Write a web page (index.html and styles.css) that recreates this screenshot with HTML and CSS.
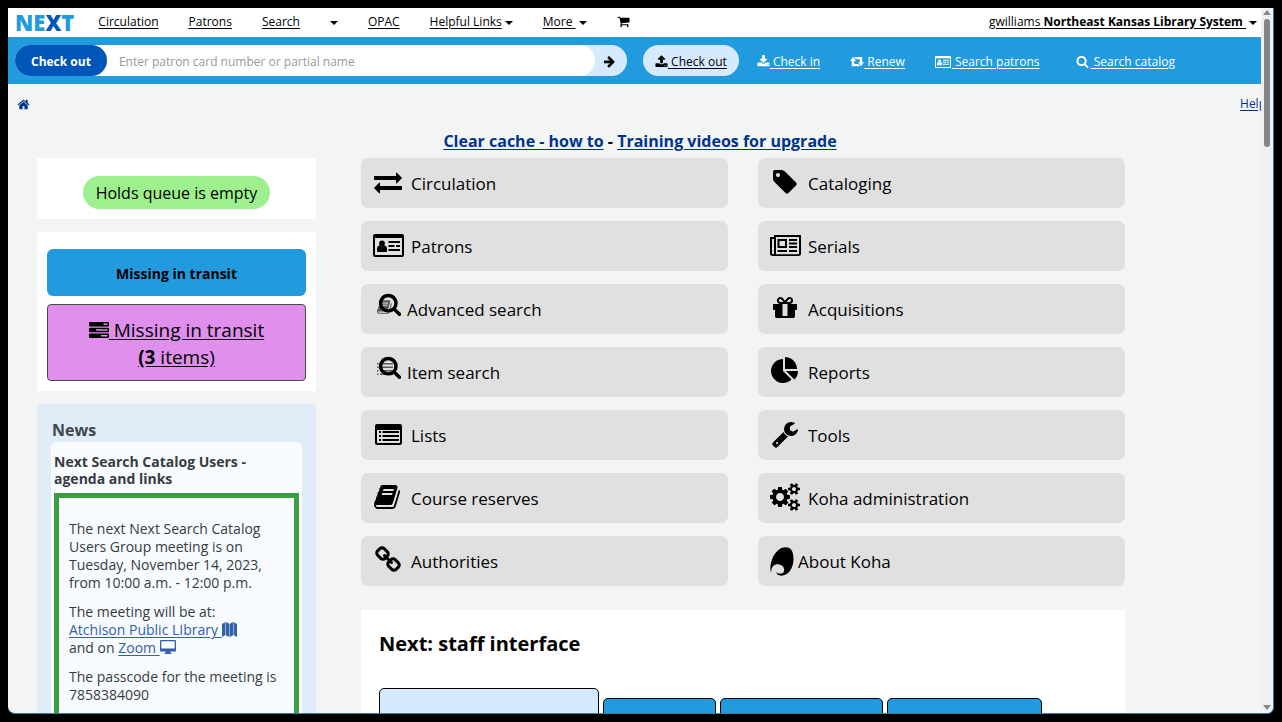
FILE: index.html
```html
<!DOCTYPE html>
<html lang="en">
<head>
<meta charset="utf-8">
<title>Koha staff interface</title>
<link rel="stylesheet" href="styles.css">
</head>
<body>
<svg class="sprite" aria-hidden="true">
  <symbol id="home" viewBox="0 0 1792 1792"><path d="M1472 992v480q0 26-19 45t-45 19h-384v-384h-256v384h-384q-26 0-45-19t-19-45v-480q0-1 .5-3t.5-3l575-474 575 474q1 2 1 6zm223-69l-62 74q-8 9-21 11h-3q-13 0-21-7l-692-577-692 577q-12 8-24 7-13-2-21-11l-62-74q-8-10-7-23.5t11-21.5l719-599q32-26 76-26t76 26l244 204v-195q0-14 9-23t23-9h192q14 0 23 9t9 23v408l219 182q10 8 11 21.5t-7 23.5z"/></symbol>
  <symbol id="search" viewBox="0 0 1792 1792"><path d="M1216 832q0-185-131.5-316.5t-316.5-131.5-316.5 131.5-131.5 316.5 131.5 316.5 316.5 131.5 316.5-131.5 131.5-316.5zm512 832q0 52-38 90t-90 38q-54 0-90-38l-343-342q-179 124-399 124-143 0-273.5-55.5t-225-150-150-225-55.5-273.5 55.5-273.5 150-225 225-150 273.5-55.5 273.5 55.5 225 150 150 225 55.5 273.5q0 220-124 399l343 343q37 37 37 90z"/></symbol>
  <symbol id="tag" viewBox="0 0 1792 1792"><path d="M576 448q0-53-37.5-90.5t-90.5-37.5-90.5 37.5-37.5 90.5 37.5 90.5 90.5 37.5 90.5-37.5 37.5-90.5zm1067 576q0 53-37 90l-491 492q-39 37-91 37-53 0-90-37l-715-716q-38-37-64.5-101t-26.5-117v-416q0-52 38-90t90-38h416q53 0 117 26.5t102 64.5l715 714q37 39 37 91z"/></symbol>
  <symbol id="arrow" viewBox="0 0 1792 1792"><path d="M1600 960q0 54-37 91l-651 651q-39 37-91 37-51 0-90-37l-75-75q-38-38-38-91t38-91l293-293h-704q-52 0-84.5-37.5t-32.5-90.5v-128q0-53 32.5-90.5t84.5-37.5h704l-293-294q-38-36-38-90t38-90l75-75q38-38 90-38 53 0 91 38l651 651q37 35 37 90z"/></symbol>
  <symbol id="cart" viewBox="0 0 1792 1792"><path d="M704 1536q0 52-38 90t-90 38-90-38-38-90 38-90 90-38 90 38 38 90zm896 0q0 52-38 90t-90 38-90-38-38-90 38-90 90-38 90 38 38 90zm128-1088v512q0 24-16.500 42.500t-40.500 21.500l-1044 122q13 60 13 70 0 16-24 64h920q26 0 45 19t19 45-19 45-45 19h-1024q-26 0-45-19t-19-45q0-11 8-31.500t16-36 21.500-40 15.500-29.500l-177-823h-204q-26 0-45-19t-19-45 19-45 45-19h256q16 0 28.500 6.500t19.500 15.500 13 24.500 8 26 5.500 29.500 4.500 26h1201q26 0 45 19t19 45z"/></symbol>
  <symbol id="gift" viewBox="0 0 1792 1792"><path d="M1056 1356v-716h-320v716q0 25 18 38.500t46 13.500h192q28 0 46-13.500t18-38.500zm-456-844h195l-126-161q-26-31-69-31-40 0-68 28t-28 68 28 68 68 28zm688-96q0-40-28-68t-68-28q-43 0-69 31l-125 161h194q40 0 68-28t28-68zm376 256v320q0 14-9 23t-23 9h-96v416q0 40-28 68t-68 28h-1088q-40 0-68-28t-28-68v-416h-96q-14 0-23-9t-9-23v-320q0-14 9-23t23-9h440q-93 0-158.500-65.500t-65.500-158.500 65.500-158.500 158.500-65.500q107 0 168 77l128 165 128-165q61-77 168-77 93 0 158.500 65.500t65.500 158.500-65.500 158.500-158.500 65.500h440q14 0 23 9t9 23z"/></symbol>
  <symbol id="pie" viewBox="0 0 1792 1792"><path d="M768 890l546 546q-106 108-247.500 168t-298.500 60q-209 0-385.500-103t-279.500-279.500-103-385.500 103-385.500 279.500-279.500 385.500-103v762zm187 6h773q0 157-60 298.500t-168 247.500zm709-128h-768v-768q209 0 385.500 103t279.500 279.500 103 385.500z"/></symbol>
  <symbol id="wrench" viewBox="0 0 1792 1792"><path d="M448 1472q0-26-19-45t-45-19-45 19-19 45 19 45 45 19 45-19 19-45zm644-420l-682 682q-37 37-90 37-52 0-91-37l-106-108q-38-36-38-90 0-53 38-91l681-681q39 98 114.500 173.500t173.500 114.500zm634-435q0 39-23 106-47 134-164.500 217.500t-258.500 83.500q-185 0-316.500-131.500t-131.500-316.500 131.500-316.500 316.500-131.500q58 0 121.500 16.500t107.500 46.500q16 11 16 28t-16 28l-293 169v224l193 107q5-3 79-48.500t135.500-81 70.500-35.500q15 0 23.500 10t8.500 25z"/></symbol>
  <symbol id="exchange" viewBox="0 0 1792 1792"><path d="M1792 1184v192q0 13-9.500 22.500t-22.500 9.500h-1376v192q0 13-9.500 22.500t-22.500 9.500q-12 0-24-10l-319-320q-9-9-9-22 0-14 9-23l320-320q9-9 23-9 13 0 22.500 9.500t9.500 22.500v192h1376q13 0 22.500 9.500t9.500 22.500zm0-544q0 14-9 23l-320 320q-9 9-23 9-13 0-22.500-9.500t-9.500-22.500v-192h-1376q-13 0-22.500-9.500t-9.500-22.500v-192q0-13 9.500-22.500t22.500-9.500h1376v-192q0-14 9-23t23-9q12 0 24 10l319 319q9 9 9 23z"/></symbol>
  <symbol id="upload" viewBox="0 0 1792 1792"><path d="M1344 1472q0-26-19-45t-45-19-45 19-19 45 19 45 45 19 45-19 19-45zm256 0q0-26-19-45t-45-19-45 19-19 45 19 45 45 19 45-19 19-45zm128-224v320q0 40-28 68t-68 28h-1472q-40 0-68-28t-28-68v-320q0-40 28-68t68-28h427q21 56 70.500 92t110.500 36h256q61 0 110.500-36t70.500-92h427q40 0 68 28t28 68zm-325-648q-17 40-59 40h-256v448q0 26-19 45t-45 19h-256q-26 0-45-19t-19-45v-448h-256q-42 0-59-40-17-39 14-69l448-448q18-19 45-19t45 19l448 448q31 30 14 69z"/></symbol>
  <symbol id="download" viewBox="0 0 1792 1792"><path d="M1344 1344q0-26-19-45t-45-19-45 19-19 45 19 45 45 19 45-19 19-45zm256 0q0-26-19-45t-45-19-45 19-19 45 19 45 45 19 45-19 19-45zm128-224v320q0 40-28 68t-68 28h-1472q-40 0-68-28t-28-68v-320q0-40 28-68t68-28h465l135 136q58 56 136 56t136-56l136-136h464q40 0 68 28t28 68zm-325-569q17 41-14 70l-448 448q-18 19-45 19t-45-19l-448-448q-31-29-14-70 17-39 59-39h256v-448q0-26 19-45t45-19h256q26 0 45 19t19 45v448h256q42 0 59 39z"/></symbol>
  <symbol id="gears" viewBox="0 0 1920 1792"><path d="M896 896q0-106-75-181t-181-75-181 75-75 181 75 181 181 75 181-75 75-181zm768 512q0-52-38-90t-90-38-90 38-38 90q0 53 37.500 90.500t90.500 37.500 90.500-37.500 37.500-90.500zm0-1024q0-52-38-90t-90-38-90 38-38 90q0 53 37.500 90.500t90.500 37.500 90.500-37.500 37.500-90.500zm-384 421v185q0 10-7 19.500t-16 10.500l-155 24q-11 35-32 76 34 48 90 115 7 11 7 20 0 12-7 19-23 30-82.500 89.500t-78.500 59.500q-11 0-21-7l-115-90q-37 19-77 31-11 108-23 155-7 24-30 24h-186q-11 0-20-7.500t-10-17.500l-23-153q-34-10-75-31l-118 89q-7 7-20 7-11 0-21-8-144-133-144-160 0-9 7-19 10-14 41-53t47-61q-23-44-35-82l-152-24q-10-1-17-9.500t-7-19.500v-185q0-10 7-19.500t16-10.500l155-24q11-35 32-76-34-48-90-115-7-11-7-20 0-12 7-20 22-30 82-89t79-59q11 0 21 7l115 90q34-18 77-32 11-108 23-154 7-24 30-24h186q11 0 20 7.500t10 17.500l23 153q34 10 75 31l118-89q8-7 20-7 11 0 21 8 144 133 144 160 0 8-7 19-12 16-42 54t-45 60q23 48 34 82l152 23q10 2 17 10.500t7 19.500zm640 533v140q0 16-149 31-12 27-30 52 51 113 51 138 0 4-4 7-122 71-124 71-8 0-46-47t-52-68q-20 2-30 2t-30-2q-14 21-52 68t-46 47q-2 0-124-71-4-3-4-7 0-25 51-138-18-25-30-52-149-15-149-31v-140q0-16 149-31 13-29 30-52-51-113-51-138 0-4 4-7 4-2 35-20t59-34 30-16q8 0 46 46.500t52 67.500q20-2 30-2t30 2q51-71 92-112l6-2q4 0 124 70 4 3 4 7 0 25-51 138 17 23 30 52 149 15 149 31zm0-1024v140q0 16-149 31-12 27-30 52 51 113 51 138 0 4-4 7-122 71-124 71-8 0-46-47t-52-68q-20 2-30 2t-30-2q-14 21-52 68t-46 47q-2 0-124-71-4-3-4-7 0-25 51-138-18-25-30-52-149-15-149-31v-140q0-16 149-31 13-29 30-52-51-113-51-138 0-4 4-7 4-2 35-20t59-34 30-16q8 0 46 46.500t52 67.500q20-2 30-2t30 2q51-71 92-112l6-2q4 0 124 70 4 3 4 7 0 25-51 138 17 23 30 52 149 15 149 31z"/></symbol>
  <symbol id="book" viewBox="0 0 1792 1792"><path d="M1639 478q40 57 18 129l-275 906q-19 64-76.500 107.500t-122.500 43.500h-923q-77 0-148.500-53.500t-99.500-131.500q-24-67-2-127 0-4 3-27t4-37q1-8-3-21.500t-3-19.500q2-11 8-21t16.500-23.500 16.500-23.500q23-38 45-91.500t30-91.500q3-10 .5-30t-.5-28q3-11 17-28t17-23q21-36 42-92t25-90q1-9-2.500-32t.5-28q4-13 22-30.500t22-22.500q19-26 42.500-84.500t27.500-96.500q1-8-3-25.500t-2-26.500q2-8 9-18t18-23 17-21q8-12 16.500-30.500t15-35 16-36 19.500-32 26.500-23.500 36-11.500 47.500 5.500l-1 3q38-9 51-9h761q74 0 114 56t18 130l-274 906q-36 119-71.500 153.500t-128.500 34.500h-869q-27 0-38 15-11 16-1 43 24 70 144 70h923q29 0 56-15.500t35-41.500l300-987q7-22 5-57 38 15 59 43zm-1064 2q-4 13 2 22.500t20 9.500h608q13 0 25.500-9.500t16.500-22.500l21-64q4-13-2-22.500t-20-9.500h-608q-13 0-25.500 9.500t-16.500 22.500zm-83 256q-4 13 2 22.500t20 9.500h608q13 0 25.500-9.500t16.500-22.500l21-64q4-13-2-22.500t-20-9.500h-608q-13 0-25.500 9.500t-16.500 22.500z"/></symbol>
  <symbol id="link" viewBox="0 0 1792 1792"><path d="M1520 1216q0-40-28-68l-208-208q-28-28-68-28-42 0-72 32 3 3 19 18.500t21.500 21.500 15 19 13 25.500 3.500 27.500q0 40-28 68t-68 28q-15 0-27.500-3.500t-25.500-13-19-15-21.500-21.500-18.500-19q-33 31-33 73 0 40 28 68l206 207q27 27 68 27 40 0 68-26l147-146q28-28 28-67zm-703-705q0-40-28-68l-206-207q-28-28-68-28-39 0-68 27l-147 146q-28 28-28 67 0 40 28 68l208 208q27 27 68 27 42 0 72-31-3-3-19-18.500t-21.500-21.500-15-19-13-25.500-3.500-27.500q0-40 28-68t68-28q15 0 27.500 3.500t25.500 13 19 15 21.500 21.500 18.500 19q33-31 33-73zm895 705q0 120-85 203l-147 146q-83 83-203 83-121 0-204-85l-206-207q-83-83-83-203 0-123 88-209l-88-88q-86 88-208 88-120 0-204-84l-208-208q-84-84-84-204t85-203l147-146q83-83 203-83 121 0 204 85l206 207q83 83 83 203 0 123-88 209l88 88q86-88 208-88 120 0 204 84l208 208q84 84 84 204z"/></symbol>
  <symbol id="retweet" viewBox="0 0 14 10"><path d="M0 4L3 0l3 4H4.200v3h4l2 2.300H1.800V4zM14 5.300l-3 4-3-4h1.800V2.300h-4L3.800 0h8.400v5.300z"/></symbol>
  <symbol id="idcard" viewBox="0 0 31 23"><path fill-rule="evenodd" d="M2 0h27q2 0 2 2v19q0 2-2 2H2q-2 0-2-2V2q0-2 2-2zM2 4v16.500q0 .5.500.5h26q.5 0 .5-.5V4z"/><circle cx="9" cy="9.500" r="2.900"/><path d="M4 17v-2q0-3.500 2.700-3.500Q9 13.500 11.300 11.500 14 11.500 14 15v2q0 1-1 1H5q-1 0-1-1zM15.500 7h11.500v2H15.500zM15.500 11h6v2h-6zM23 11h4v2h-4zM15.500 15h11.500v2H15.500z"/></symbol>
  <symbol id="listalt" viewBox="0 0 27 21"><path fill-rule="evenodd" d="M2 0h23q2 0 2 2v17q0 2-2 2H2q-2 0-2-2V2q0-2 2-2zM2 6v12.500q0 .5.500.500h22q.5 0 .5-.5V6z"/><path d="M4 7h2v2H4zM7.500 7H24v2H7.500zM4 11h2v2H4zM7.500 11H24v2H7.500zM4 15h2v2H4zM7.500 15H24v2H7.500z"/></symbol>
  <symbol id="newspaper" viewBox="0 0 31 21"><path fill-rule="evenodd" d="M4 0h27v18.500q0 2.500-2.500 2.500h-26Q0 21 0 18.500V2h4zM2 4v14.500q0 .8 1 .8t1-.8V4zM6 2v16.500l-.3.700h22.600q.7 0 .7-.7V2zM7.500 4H17v9H7.500zM9.500 6v5H15V6z"/><path d="M7.500 15H17v2H7.500zM19 4h8v2h-8zM19 7.500h8v2h-8zM19 11h8v2h-8zM19 15h8v2h-8z"/></symbol>
  <symbol id="tasks" viewBox="0 0 20 16"><path fill-rule="evenodd" d="M1 0h18q1 0 1 1v2.500q0 1-1 1H1q-1 0-1-1V1q0-1 1-1zM14.500 1.500v1.500h4V1.500zM1 5.800h18q1 0 1 1v2.500q0 1-1 1H1q-1 0-1-1V6.800q0-1 1-1zM7 7.300v1.500h11.500V7.300zM1 11.500h18q1 0 1 1V15q0 1-1 1H1q-1 0-1-1v-2.500q0-1 1-1zM12 13v1.500h6.500V13z"/></symbol>
  <symbol id="map" viewBox="0 0 15 15"><path d="M0 2L3.500 0v13L0 15zM4 0L7.300 1.800V15L4 13.200zM7.800 1.800l3.200-1.800v13.200l-3.200 1.800zM11.500 0l3.500 2v13l-3.500-2z"/></symbol>
  <symbol id="desktop" viewBox="0 0 16 14"><path fill-rule="evenodd" d="M1 0h14q1 0 1 1v9.500q0 1-1 1h-4.500v1q1 .3 1 1.500h-7q0-1.200 1-1.500v-1H1q-1 0-1-1V1q0-1 1-1zM1.300 1.300v7.200h13.400V1.300z"/></symbol>
  <symbol id="advsearch" viewBox="0 0 24 24"><use href="#book" x="0" y="7" width="16" height="16" opacity=".6"/><use href="#search" x="1" y="0" width="24" height="24"/></symbol>
  <symbol id="itemsearch" viewBox="0 0 24 24"><path opacity=".6" d="M0 8h1.500v1.500H0zM3 8h13v1.500H3zM0 11.500h1.500V13H0zM3 11.500h13V13H3zM0 15h1.500v1.500H0zM3 15h13v1.500H3zM0 18.500h1.500V20H0zM3 18.500h13V20H3z"/><use href="#search" x="1" y="0" width="24" height="24"/></symbol>
  <symbol id="koha" viewBox="0 0 71 87"><path d="M1 73C-2 40 18 1 46 1 64 1 70 15 70 36 70 62 56 86 33 86 24 86 20 82 18 76 24 81 36 82 40 76 46 64 38 54 24 52 10 52 4 60 3 74Z"/></symbol>
</svg>

<div class="window">
  <div class="page">
    <nav class="navbar">
      <a class="logo" href="#">NE<span class="logo-x">X</span>T</a>
      <a href="#">Circulation</a>
      <a href="#">Patrons</a>
      <a href="#">Search</a>
      <button class="caret-button" type="button" aria-label="Search menu"><span class="caret"></span></button>
      <a href="#">OPAC</a>
      <span class="menu"><a href="#">Helpful Links</a><span class="caret"></span></span>
      <span class="menu"><a href="#">More&nbsp;</a><span class="caret"></span></span>
      <a href="#" aria-label="Cart"><svg class="icon"><use href="#cart"/></svg></a>
      <span class="menu user"><a href="#">gwilliams <b>Northeast Kansas Library System&nbsp;</b></a><span class="caret"></span></span>
    </nav>

    <div class="searchbar">
      <form class="searchform">
        <label class="search-label" for="findborrower">Check out</label>
        <input class="search-input" id="findborrower" type="text" placeholder="Enter patron card number or partial name">
        <button class="search-go" type="button" aria-label="Submit"><svg class="icon"><use href="#arrow"/></svg></button>
      </form>
      <div class="modes">
        <a class="mode mode-active" href="#"><svg class="icon"><use href="#upload"/></svg> Check out</a>
        <a class="mode" href="#"><svg class="icon"><use href="#download"/></svg> Check in</a>
        <a class="mode" href="#"><svg class="icon-retweet"><use href="#retweet"/></svg> Renew</a>
        <a class="mode" href="#"><svg class="icon-card"><use href="#idcard"/></svg> Search patrons</a>
        <a class="mode mode-catalog" href="#"><svg class="icon"><use href="#search"/></svg> Search catalog</a>
      </div>
    </div>

    <div class="crumbs">
      <a href="#" aria-label="Home"><svg class="icon"><use href="#home"/></svg></a>
      <a href="#">Help</a>
    </div>

    <h1 class="notice"><a href="#">Clear cache - how to</a> - <a href="#">Training videos for upgrade</a></h1>

    <div class="columns">
      <aside class="side">
        <section class="panel queue"><span class="queue-pill">Holds queue is empty</span></section>
        <section class="panel transit">
          <h2 class="transit-title">Missing in transit</h2>
          <a class="transit-link" href="#"><svg class="icon-tasks"><use href="#tasks"/></svg> Missing in transit<br><b>(3</b> items)</a>
        </section>
        <section class="news">
          <h2 class="news-heading">News</h2>
          <article class="news-item">
            <h3 class="news-title">Next Search Catalog Users - agenda and links</h3>
            <div class="news-body">
              <p>The next Next Search Catalog Users Group meeting is on Tuesday, November 14, 2023, from 10:00 a.m. - 12:00 p.m.</p>
              <p>The meeting will be at:<br><a href="#">Atchison Public LIbrary <svg class="icon-map"><use href="#map"/></svg></a><br>and on <a href="#">Zoom <svg class="icon-desktop"><use href="#desktop"/></svg></a></p>
              <p>The passcode for the meeting is 7858384090</p>
            </div>
          </article>
        </section>
      </aside>

      <main class="main">
        <div class="tiles">
          <a class="tile" href="#"><span class="tile-icon"><svg class="i28"><use href="#exchange"/></svg></span>Circulation</a>
          <a class="tile" href="#"><span class="tile-icon"><svg class="i28"><use href="#tag"/></svg></span>Cataloging</a>
          <a class="tile" href="#"><span class="tile-icon"><svg class="i-card"><use href="#idcard"/></svg></span>Patrons</a>
          <a class="tile" href="#"><span class="tile-icon"><svg class="i-news"><use href="#newspaper"/></svg></span>Serials</a>
          <a class="tile" href="#"><span class="tile-icon tile-icon-stack"><svg class="i-stack"><use href="#advsearch"/></svg></span>Advanced search</a>
          <a class="tile" href="#"><span class="tile-icon"><svg class="i28"><use href="#gift"/></svg></span>Acquisitions</a>
          <a class="tile" href="#"><span class="tile-icon tile-icon-stack"><svg class="i-stack"><use href="#itemsearch"/></svg></span>Item search</a>
          <a class="tile" href="#"><span class="tile-icon"><svg class="i28"><use href="#pie"/></svg></span>Reports</a>
          <a class="tile" href="#"><span class="tile-icon"><svg class="i-list"><use href="#listalt"/></svg></span>Lists</a>
          <a class="tile" href="#"><span class="tile-icon"><svg class="i28"><use href="#wrench"/></svg></span>Tools</a>
          <a class="tile" href="#"><span class="tile-icon"><svg class="i28"><use href="#book"/></svg></span>Course reserves</a>
          <a class="tile" href="#"><span class="tile-icon"><svg class="i-gears"><use href="#gears"/></svg></span>Koha administration</a>
          <a class="tile" href="#"><span class="tile-icon"><svg class="i28"><use href="#link"/></svg></span>Authorities</a>
          <a class="tile" href="#"><span class="tile-icon tile-icon-koha"><svg class="i-koha"><use href="#koha"/></svg></span>About Koha</a>
        </div>
        <section class="staff">
          <h2 class="staff-title">Next: staff interface</h2>
          <div class="tabs">
            <div class="tab tab-active"></div>
            <div class="tab tab-short"></div>
            <div class="tab tab-long"></div>
            <div class="tab tab-medium"></div>
          </div>
        </section>
      </main>
    </div>
  </div>
  <div class="scrollbar">
    <span class="scroll-up"></span>
    <span class="scroll-thumb"></span>
    <span class="scroll-down"></span>
  </div>
</div>
</body>
</html>
```

FILE: styles.css
```css
* { box-sizing: border-box; }

body {
  margin: 0;
  padding: 8px;
  height: 100vh;
  overflow: hidden;
  background: #000;
  color: #000;
  font: 12px/18px "Open Sans", "Noto Sans", sans-serif;
}

h1, h2, h3, p { margin: 0; }
a { color: inherit; text-underline-offset: 2px; }
svg { fill: currentColor; flex: none; }
.sprite { position: absolute; width: 0; height: 0; }

.window {
  display: flex;
  height: 100%;
  overflow: hidden;
  background: #f3f5f4;
  border-right: 1px solid #3a7f9c;
  border-bottom: 1px solid #3a7f9c;
  border-radius: 0 0 7px 7px;
}

.page { flex: 1; min-width: 0; overflow: hidden; }

/* Top navigation */
.navbar {
  display: flex;
  align-items: center;
  gap: 30px;
  height: 29px;
  padding: 0 4px 2px 7px;
  background: #fff;
  white-space: nowrap;
}
.logo {
  margin-right: -6px;
  color: #219bde;
  font-size: 22px;
  font-weight: 800;
  line-height: 26px;
  text-decoration: none;
}
.logo-x { color: #0056b8; }
.menu { display: flex; align-items: center; gap: 3px; }
.user { margin-left: auto; }
.caret {
  border: 4px solid transparent;
  border-top-color: #000;
  border-bottom: 0;
  margin-top: 3px;
}
.caret-button { display: flex; padding: 0; border: 0; background: none; }
.icon { width: 13px; height: 13px; vertical-align: -2px; }
.navbar .icon { display: block; }

/* Search bar */
.searchbar {
  display: flex;
  align-items: center;
  gap: 16px;
  height: 47px;
  padding-left: 7px;
  background: #219bde;
}
.searchform {
  display: flex;
  flex: 0 1 612px;
  height: 31px;
  background: linear-gradient(to right, #fff 50%, #d6eaff 50%);
  border-radius: 16px;
}
.search-label {
  flex: none;
  padding: 2px 16px 0;
  border-radius: 16px;
  background: #0056b8;
  color: #fff;
  font-weight: 700;
  line-height: 29px;
}
.search-input {
  flex: 1;
  min-width: 0;
  padding: 2px 12px 0;
  border: 0;
  border-radius: 0 16px 16px 0;
  background: #fff;
  font: inherit;
}
.search-input::placeholder { color: #999; }
.search-go {
  width: 32px;
  padding: 2px 4px 0 0;
  border: 0;
  background: none;
  line-height: 1;
}
.modes { display: flex; gap: 6px; }
.mode {
  padding: 2px 12px 0;
  border-radius: 16px;
  color: #fff;
  line-height: 29px;
  white-space: nowrap;
}
.mode-active { background: #d6eaff; color: #000; }
.mode-catalog { margin-left: 6px; }
.mode-catalog .icon { margin-right: 2px; }
.icon-retweet { width: 14px; height: 10px; vertical-align: -1px; }
.icon-card { width: 16px; height: 12px; vertical-align: -2px; margin-right: 1px; }

/* Breadcrumbs and notice */
.crumbs {
  display: flex;
  justify-content: space-between;
  align-items: center;
  margin-right: -5px;
  padding: 11px 0 9px 9px;
  color: #00348a;
}
.crumbs .icon { display: block; }
.notice {
  padding: 7px 0 5px 11px;
  font-size: 16px;
  line-height: 24px;
  text-align: center;
}
.notice a { color: #00348a; }

.columns {
  display: grid;
  grid-template-columns: 279fr 764fr;
  gap: 45px;
  padding: 0 136px 0 29px;
}

/* Left column */
.side { display: flex; flex-direction: column; gap: 13px; }
.panel { background: #fff; }
.queue { padding: 18px 0 10px; text-align: center; }
.queue-pill {
  display: inline-block;
  padding: 2px 13px 0;
  border-radius: 17px;
  background: #9ef08e;
  font-size: 16px;
  line-height: 31px;
  vertical-align: top;
}
.transit { display: grid; gap: 8px; padding: 17px 10px 10px; text-align: center; }
.transit-title {
  padding-top: 2px;
  border-radius: 6px;
  background: #219bde;
  font-size: 14px;
  line-height: 45px;
}
.transit-link {
  padding: 12px 0 9px;
  border: 1px solid #4a4a4a;
  border-radius: 4px;
  background: #e08fed;
  font-size: 19px;
  line-height: 27px;
}
.icon-tasks { width: 20px; height: 16px; vertical-align: -1px; }
.news { padding: 15px 14px; background: #e0ecf8; color: #363c42; }
.news-heading { margin-bottom: 1px; padding-left: 1px; font-size: 16px; line-height: 22px; color: #40474e; }
.news-item { padding: 11px 3px; border-radius: 6px; background: #f7fbfe; }
.news-title { font-size: 14px; line-height: 17px; }
.news-body {
  display: grid;
  gap: 11px;
  margin-top: 6px;
  padding: 22px 10px;
  border: 5px solid #399f40;
  font-size: 14px;
  line-height: 18px;
}
.news-body a { color: #3460a9; }
.icon-map { width: 15px; height: 15px; vertical-align: -2px; }
.icon-desktop { width: 16px; height: 14px; vertical-align: -1px; }

/* Module tiles */
.tiles { display: grid; grid-template-columns: 1fr 1fr; gap: 13px 30px; }
.tile {
  display: flex;
  align-items: center;
  gap: 6px;
  height: 50px;
  padding: 2px 0 0 10px;
  border-radius: 7px;
  background: #e0e0e0;
  font-size: 17px;
  text-decoration: none;
}
.tile-icon { display: flex; justify-content: center; width: 34px; padding-bottom: 4px; }
.tile-icon-stack { justify-content: flex-end; width: 30px; padding: 0 0 12px; }
.tile-icon-koha { justify-content: flex-start; width: 24px; padding: 0 0 1px 2px; }
.i28 { width: 28px; height: 28px; }
.i-card { width: 31px; height: 23px; }
.i-news { width: 31px; height: 21px; }
.i-list { width: 27px; height: 21px; }
.i-gears { width: 30px; height: 28px; }
.i-stack { width: 24px; height: 24px; }
.i-koha { width: 24px; height: 29px; }

/* Staff interface panel */
.staff { margin-top: 24px; padding: 19px 18px; background: #fff; }
.staff-title { font-size: 20px; line-height: 30px; }
.tabs { display: flex; align-items: flex-end; gap: 4px; margin-top: 29px; }
.tab {
  height: 50px;
  border: 1px solid #000;
  border-radius: 5px 5px 0 0;
  background: #219bde;
}
.tab-active { width: 220px; height: 60px; background: #d6eaff; }
.tab-short { width: 113px; }
.tab-long { width: 163px; }
.tab-medium { width: 155px; }

/* Scrollbar */
.scrollbar {
  display: flex;
  flex-direction: column;
  align-items: center;
  width: 12px;
  padding: 2px 0 3px;
  background: #f0f0f0;
}
.scroll-up { border: 4px solid transparent; border-top: 0; border-bottom: 5px solid #868686; }
.scroll-thumb { width: 6px; height: 128px; margin-top: 4px; border-radius: 3px; background: #868686; }
.scroll-down { margin-top: auto; border: 4px solid transparent; border-bottom: 0; border-top: 5px solid #868686; }
```
